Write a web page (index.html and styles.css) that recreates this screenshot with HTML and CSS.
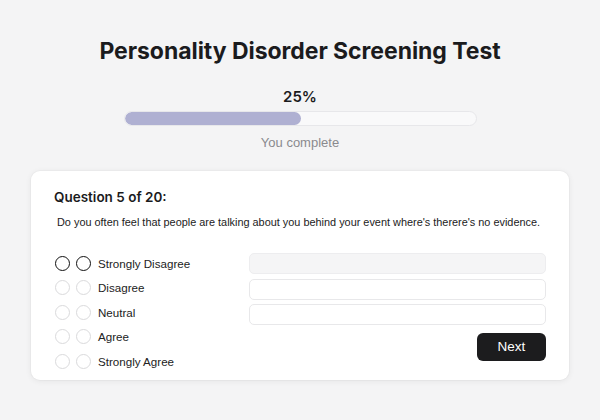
FILE: index.html
```html
<!DOCTYPE html>
<html>
<head>
<meta charset="utf-8">
<link rel="stylesheet" href="styles.css">
</head>
<body>
<div class="page">
  <h1 class="title">Personality Disorder Screening Test</h1>
  <div class="progress">
    <div class="pct">25%</div>
    <div class="track"><div class="fill" style="width:50.4%"></div></div>
    <div class="caption">You complete</div>
  </div>
  <div class="card">
    <div class="qnum">Question 5 of 20:</div>
    <div class="qtext">Do you often feel that people are talking about you behind your event where's therere's no evidence.</div>
    <div class="body">
      <div class="options">
        <div class="opt active"><span class="radio"></span><span class="radio"></span><span class="label">Strongly Disagree</span></div>
        <div class="opt"><span class="radio"></span><span class="radio"></span><span class="label">Disagree</span></div>
        <div class="opt"><span class="radio"></span><span class="radio"></span><span class="label">Neutral</span></div>
        <div class="opt"><span class="radio"></span><span class="radio"></span><span class="label">Agree</span></div>
        <div class="opt"><span class="radio"></span><span class="radio"></span><span class="label">Strongly Agree</span></div>
      </div>
      <div class="fields">
        <div class="field filled"></div>
        <div class="field"></div>
        <div class="field"></div>
        <div class="actions"><button class="next">Next</button></div>
      </div>
    </div>
  </div>
</div>
</body>
</html>
```
FILE: styles.css
```css
* { box-sizing: border-box; }
html, body { margin: 0; padding: 0; }
body {
  width: 600px;
  height: 420px;
  background: #f4f4f5;
  font-family: Inter, "Liberation Sans", sans-serif;
  color: #1b1b1d;
  overflow: hidden;
}
.page {
  padding: 37px 31px 0;
  display: flex;
  flex-direction: column;
  align-items: center;
}
.title {
  margin: 0;
  font-size: 23px;
  font-weight: 700;
  line-height: 28px;
  letter-spacing: -0.05px;
}
.progress {
  margin-top: 23px;
  width: 353px;
  display: flex;
  flex-direction: column;
  align-items: center;
}
.pct {
  font-size: 15px;
  font-weight: 600;
  line-height: 18px;
}
.track {
  margin-top: 5px;
  width: 100%;
  height: 15px;
  border-radius: 8px;
  background: #f9f9fa;
  border: 1px solid #e7e7ea;
  overflow: hidden;
}
.fill {
  height: 100%;
  background: #afb0d2;
  border-radius: 8px;
}
.caption {
  margin-top: 9px;
  font-family: "Liberation Sans", Arial, sans-serif;
  font-size: 13px;
  color: #8a8a8e;
  line-height: 16px;
}
.card {
  margin-top: 20px;
  width: 538px;
  background: #ffffff;
  border-radius: 9px;
  box-shadow: 0 1px 6px rgba(0,0,0,0.07), 0 0 0 1px rgba(0,0,0,0.02);
  padding: 17px 23px 6px;
}
.qnum {
  font-size: 13.5px;
  font-weight: 600;
  line-height: 18px;
}
.qtext {
  margin-top: 9px;
  padding-left: 3px;
  font-family: "Liberation Sans", Arial, sans-serif;
  font-size: 10.9px;
  line-height: 15px;
  color: #222;
  white-space: nowrap;
}
.body {
  margin-top: 21px;
  display: grid;
  grid-template-columns: 195px 1fr;
}
.options {
  display: flex;
  flex-direction: column;
}
.opt {
  display: flex;
  align-items: center;
  height: 24.5px;
  gap: 6px;
  padding-left: 1px;
}
.radio {
  width: 15px;
  height: 15px;
  border-radius: 50%;
  border: 1px solid #dadadc;
  background: #fff;
}
.opt.active .radio {
  border: 1.8px solid #111;
}
.label {
  margin-left: 1px;
  font-family: "Liberation Sans", Arial, sans-serif;
  font-size: 11.6px;
  color: #222;
}
.fields {
  display: flex;
  flex-direction: column;
  gap: 4.5px;
  padding-top: 2px;
}
.field {
  height: 21px;
  border: 1px solid #e8e8ea;
  border-radius: 5px;
  background: #fff;
}
.field.filled {
  background: #f5f5f6;
  border-color: #ededef;
}
.actions {
  display: flex;
  justify-content: flex-end;
  margin-top: 3px;
}
.next {
  width: 69px;
  height: 28px;
  border: none;
  border-radius: 6px;
  background: #1c1c1e;
  color: #fff;
  font-family: "Liberation Sans", Arial, sans-serif;
  font-size: 13.5px;
  font-weight: 400;
}
```
